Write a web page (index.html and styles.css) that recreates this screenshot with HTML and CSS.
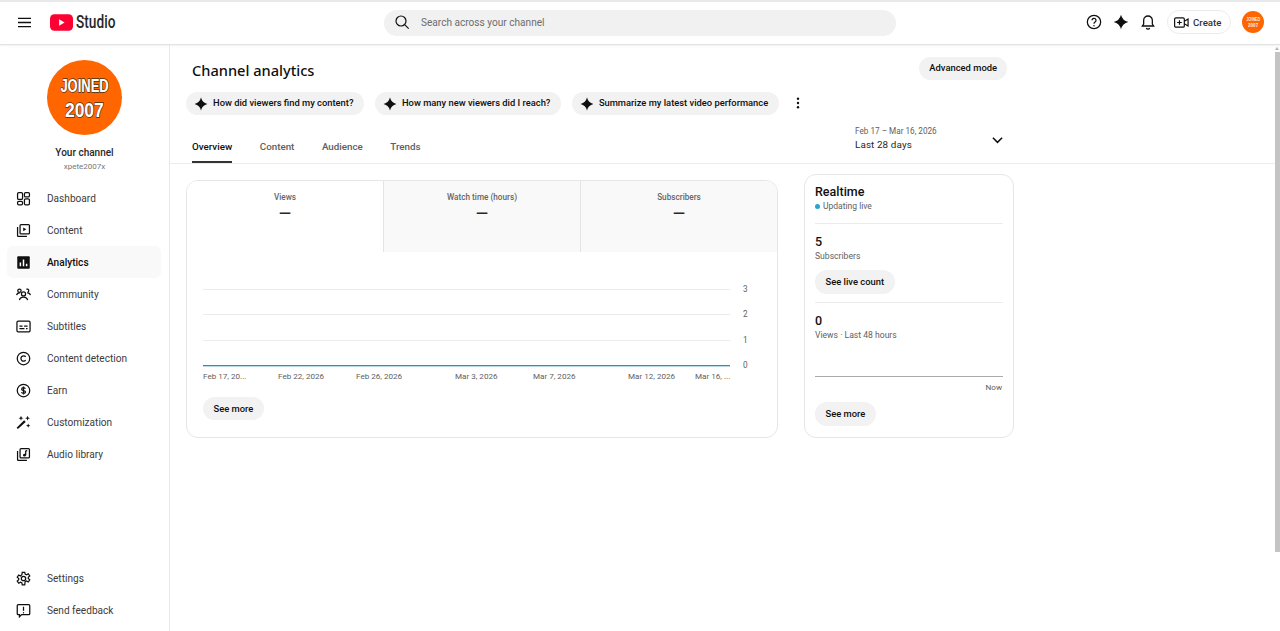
FILE: index.html
```html
<!DOCTYPE html>
<html lang="en">

<head>
    <meta charset="UTF-8">
    <meta name="viewport" content="width=device-width, initial-scale=1.0">
    <title>Channel analytics - YouTube Studio</title>
    <link rel="stylesheet" href="styles.css">
</head>

<body>
    <svg class="defs" width="0" height="0">
        <symbol id="spark" viewBox="0 0 24 24">
            <path d="M12 1Q14.2 9.800 23 12 14.2 14.2 12 23 9.800 14.2 1 12 9.800 9.800 12 1Z" />
        </symbol>
    </svg>

    <!-- top bar -->
    <header class="topbar">
        <div class="topbar-left">
            <svg class="menu-icon" viewBox="0 0 14 11"><path d="M0 1h14M0 5.500h14M0 10h14" /></svg>
            <div class="logo">
                <svg class="logo-mark" viewBox="0 0 24 17">
                    <rect width="24" height="17" rx="4.500" fill="#ff0033" />
                    <path d="M9.500 5.200v6.600l5.700-3.300z" fill="#fff" />
                </svg>
                <span class="logo-text">Studio</span>
            </div>
        </div>
        <div class="search">
            <svg class="search-icon" viewBox="0 0 24 24"><circle cx="10.500" cy="10.500" r="7.500" /><path d="M16 16l6 6" /></svg>
            <span>Search across your channel</span>
        </div>
        <div class="topbar-right">
            <svg class="top-icon line" viewBox="0 0 24 24">
                <circle cx="12" cy="12" r="10" />
                <path d="M9 9.500a3 3 0 1 1 4.600 2.500c-1 .7-1.600 1.300-1.600 2.500" />
                <circle class="dot" cx="12" cy="17.500" r="1.100" />
            </svg>
            <svg class="top-icon spark-icon" viewBox="0 0 24 24"><use href="#spark" /></svg>
            <svg class="top-icon line" viewBox="0 0 24 24">
                <path d="M12 3a6.500 6.500 0 0 0-6.500 6.500V15L3.500 18h17l-2-3V9.500A6.500 6.500 0 0 0 12 3Z" />
                <path d="M9.500 21a2.700 2.700 0 0 0 5 0" />
            </svg>
            <div class="create-btn">
                <svg class="create-icon" viewBox="0 0 24 20">
                    <rect x="1" y="2.500" width="15.500" height="15" rx="2" />
                    <path d="M5 10h7.500M8.750 6.300v7.400M16.500 8l6-3.500v11l-6-3.500" />
                </svg>
                <span>Create</span>
            </div>
            <div class="avatar avatar-small"><span class="avatar-top">JOINED</span><span class="avatar-bottom">2007</span></div>
        </div>
    </header>

    <div class="layout">
        <!-- left menu -->
        <nav class="sidebar">
            <div class="channel">
                <div class="avatar avatar-big"><span class="avatar-top">JOINED</span><span class="avatar-bottom">2007</span></div>
                <div class="channel-name">Your channel</div>
                <div class="channel-handle">xpete2007x</div>
            </div>
            <ul class="menu">
                <li class="menu-item">
                    <svg class="menu-svg" viewBox="0 0 24 24"><rect x="2.500" y="2.500" width="8" height="11" rx="2" /><rect x="13.500" y="2.500" width="8" height="7" rx="2" /><rect x="2.500" y="16.500" width="8" height="5.500" rx="2" /><rect x="13.500" y="12.500" width="8" height="9.500" rx="2" /></svg>
                    Dashboard
                </li>
                <li class="menu-item">
                    <svg class="menu-svg" viewBox="0 0 24 24"><rect x="6.500" y="2.500" width="15" height="15" rx="1.500" /><path d="M2.500 6.500v14a1 1 0 0 0 1 1h14" /><path class="fill" d="M11.500 7v6l5-3z" /></svg>
                    Content
                </li>
                <li class="menu-item active">
                    <svg class="menu-svg" viewBox="0 0 24 24"><rect class="fill" x="2" y="2" width="20" height="20" rx="1.500" /><path class="white" d="M7 12v6M12 7v11M17 14v4" /></svg>
                    Analytics
                </li>
                <li class="menu-item">
                    <svg class="menu-svg" viewBox="0 0 24 24"><circle cx="12" cy="11" r="3.300" /><path d="M5.500 21c.5-3.500 3-5 6.500-5s6 1.500 6.500 5" /><circle cx="5.500" cy="6" r="2.700" /><path d="M1 13c.3-2.500 2-3.800 5-3.800" /><path d="M16.500 3.500a2.700 2.700 0 1 1 2 5" /><path d="M23 13c-.3-2.500-2-3.800-5-3.800" /></svg>
                    Community
                </li>
                <li class="menu-item">
                    <svg class="menu-svg" viewBox="0 0 24 24"><rect x="1.500" y="3.500" width="21" height="17" rx="2" /><path d="M5.500 11.500h5M13 11.500h5.500M5.500 15.500h8M16 15.500h2.500" /></svg>
                    Subtitles
                </li>
                <li class="menu-item">
                    <svg class="menu-svg" viewBox="0 0 24 24"><circle cx="12" cy="12" r="10" /><path d="M15.500 9.200a4.300 4.300 0 1 0 0 5.600" /></svg>
                    Content detection
                </li>
                <li class="menu-item">
                    <svg class="menu-svg" viewBox="0 0 24 24"><circle cx="12" cy="12" r="10" /><path d="M15 9.300c-.5-1.200-1.600-1.800-3-1.800-1.700 0-3 .9-3 2.300 0 3.200 6.200 1.400 6.200 4.500 0 1.400-1.400 2.300-3.200 2.300-1.500 0-2.700-.7-3.200-2M12 5.500v13" /></svg>
                    Earn
                </li>
                <li class="menu-item">
                    <svg class="menu-svg" viewBox="0 0 24 24"><path d="M3 22.500l-2-2L13 8.500l2.500 2.500Z" class="wand" /><path class="fill" d="M8 1l1.100 2.900L12 5l-2.900 1.100L8 9 6.900 6.100 4 5l2.900-1.100zM18.500 1l1.100 2.900L22.500 5l-2.900 1.100L18.500 9l-1.100-2.900L14.500 5l2.900-1.100zM19.500 13.500l1 2.500 2.500 1-2.500 1-1 2.500-1-2.500-2.500-1 2.500-1z" /></svg>
                    Customization
                </li>
                <li class="menu-item">
                    <svg class="menu-svg" viewBox="0 0 24 24"><rect x="6.500" y="2.500" width="15" height="15" rx="1.500" /><path d="M2.500 6.500v14a1 1 0 0 0 1 1h14" /><path d="M15.500 6v7" /><circle class="fill" cx="13.500" cy="13" r="2.200" /><path d="M15.500 6h2.500" /></svg>
                    Audio library
                </li>
            </ul>
            <ul class="menu menu-bottom">
                <li class="menu-item">
                    <svg class="menu-svg" viewBox="0 0 24 24"><path d="M10 2h4l.6 3 2.300 1 2.700-1.600 2.400 3.600-2.300 2v2l2.300 2-2.400 3.600-2.700-1.600-2.300 1L14 22h-4l-.6-3-2.300-1-2.700 1.600L2 16l2.300-2v-2L2 10l2.400-3.600L7.100 8l2.300-2Z" /><circle cx="12" cy="12" r="3.500" /></svg>
                    Settings
                </li>
                <li class="menu-item">
                    <svg class="menu-svg" viewBox="0 0 24 24"><path d="M3.500 2.500h17a1.500 1.500 0 0 1 1.500 1.500v13a1.500 1.500 0 0 1-1.500 1.500H9L5.500 22v-3.500h-2A1.500 1.500 0 0 1 2 17V4a1.500 1.500 0 0 1 1.500-1.500Z" /><path d="M12 6v6.500" /><circle class="dot" cx="12" cy="15.500" r="1.100" /></svg>
                    Send feedback
                </li>
            </ul>
        </nav>

        <main class="main">
            <div class="title-row">
                <h1 class="page-title">Channel analytics</h1>
                <div class="pill">Advanced mode</div>
            </div>
            <div class="chips">
                <div class="pill chip"><svg class="chip-icon" viewBox="0 0 24 24"><use href="#spark" /></svg>How did viewers find my content?</div>
                <div class="pill chip"><svg class="chip-icon" viewBox="0 0 24 24"><use href="#spark" /></svg>How many new viewers did I reach?</div>
                <div class="pill chip"><svg class="chip-icon" viewBox="0 0 24 24"><use href="#spark" /></svg>Summarize my latest video performance</div>
                <svg class="more-icon" viewBox="0 0 4 14"><circle cx="2" cy="2" r="1.400" /><circle cx="2" cy="7" r="1.400" /><circle cx="2" cy="12" r="1.400" /></svg>
            </div>
            <div class="tabs-row">
                <div class="tabs">
                    <div class="tab tab-active">Overview</div>
                    <div class="tab">Content</div>
                    <div class="tab">Audience</div>
                    <div class="tab">Trends</div>
                </div>
                <div class="date-picker">
                    <div>
                        <div class="date-range">Feb 17 – Mar 16, 2026</div>
                        <div class="date-label">Last 28 days</div>
                    </div>
                    <svg class="chevron" viewBox="0 0 12 8"><path d="M1 1.500l5 5 5-5" /></svg>
                </div>
            </div>

            <div class="cards">
                <section class="card overview-card">
                    <div class="metrics">
                        <div class="metric metric-active"><div class="metric-name">Views</div><div class="metric-value">—</div></div>
                        <div class="metric"><div class="metric-name">Watch time (hours)</div><div class="metric-value">—</div></div>
                        <div class="metric"><div class="metric-name">Subscribers</div><div class="metric-value">—</div></div>
                    </div>
                    <div class="chart">
                        <div class="chart-row"><div class="grid-line"></div><span>3</span></div>
                        <div class="chart-row"><div class="grid-line"></div><span>2</span></div>
                        <div class="chart-row"><div class="grid-line"></div><span>1</span></div>
                        <div class="chart-row chart-row-base"><div class="grid-line base-line"></div><span>0</span></div>
                        <div class="chart-dates">
                            <span>Feb 17, 20...</span>
                            <span>Feb 22, 2026</span>
                            <span>Feb 26, 2026</span>
                            <span>Mar 3, 2026</span>
                            <span>Mar 7, 2026</span>
                            <span>Mar 12, 2026</span>
                            <span>Mar 16, ...</span>
                        </div>
                    </div>
                    <div class="pill card-btn">See more</div>
                </section>

                <section class="card realtime-card">
                    <h2 class="realtime-title">Realtime</h2>
                    <div class="live"><i class="live-dot"></i>Updating live</div>
                    <div class="divider"></div>
                    <div class="stat">5</div>
                    <div class="stat-label">Subscribers</div>
                    <div class="pill card-btn live-btn">See live count</div>
                    <div class="divider"></div>
                    <div class="stat">0</div>
                    <div class="stat-label">Views · Last 48 hours</div>
                    <div class="mini-chart"></div>
                    <div class="now">Now</div>
                    <div class="pill card-btn">See more</div>
                </section>
            </div>
        </main>

        <div class="scrollbar"><div class="scroll-arrow"></div><div class="scroll-thumb"></div></div>
    </div>
</body>

</html>
```

FILE: styles.css
```css
* {
    margin: 0;
    padding: 0;
    box-sizing: border-box;
}

html,
body {
    height: 100%;
    overflow: hidden;
}

body {
    background-color: #fff;
    color: #0f0f0f;
    font-family: Roboto, "Liberation Sans", sans-serif;
    font-size: 10px;
}

ul {
    list-style: none;
}

.defs {
    display: block;
    height: 0;
}

/* top bar */
.topbar {
    height: 45px;
    display: flex;
    align-items: center;
    border-top: 2px solid #e9e9e9;
    border-bottom: 1px solid #e2e2e2;
    box-shadow: 0 1px 2px rgba(0, 0, 0, .06);
    padding: 0 16px 2px 0;
}

.topbar-left {
    width: 384px;
    display: flex;
    align-items: center;
    padding-left: 18px;
}

.menu-icon {
    width: 13px;
    height: 11px;
    fill: none;
    stroke: #0f0f0f;
    stroke-width: 1.4;
}

.logo {
    display: flex;
    align-items: center;
    margin-left: 19px;
}

.logo-mark {
    width: 23px;
    height: 17px;
}

.logo-text {
    font-size: 18px;
    font-weight: 500;
    color: #282828;
    transform: scaleX(.76);
    transform-origin: left center;
    margin: -1px 0 0 3px;
}

.search {
    width: 512px;
    height: 26px;
    margin-top: 2px;
    background-color: #f1f1f1;
    border-radius: 13px;
    display: flex;
    align-items: center;
    padding: 0 0 2px 10px;
    color: #6d6d6d;
    font-size: 10.1px;
}

.search-icon {
    width: 16px;
    height: 16px;
    fill: none;
    stroke: #0f0f0f;
    stroke-width: 1.8;
    margin-right: 11px;
}

.topbar-right {
    flex: 1;
    display: flex;
    align-items: center;
    justify-content: flex-end;
}

.top-icon {
    width: 16px;
    height: 16px;
    margin-right: 11px;
}

.top-icon.line {
    fill: none;
    stroke: #0f0f0f;
    stroke-width: 1.9;
}

.top-icon .dot {
    fill: #0f0f0f;
    stroke: none;
}

.spark-icon {
    fill: #0f0f0f;
}

.create-btn {
    width: 64px;
    height: 24px;
    border: 1px solid #ececec;
    border-radius: 12px;
    display: flex;
    align-items: center;
    padding-left: 6px;
    font-size: 9.7px;
    font-weight: 500;
    color: #333;
}

.create-icon {
    width: 15px;
    height: 13px;
    fill: none;
    stroke: #0f0f0f;
    stroke-width: 1.9;
    margin-right: 4px;
}

/* channel picture */
.avatar {
    border-radius: 50%;
    background-color: #ff6600;
    color: #fff;
    display: flex;
    flex-direction: column;
    align-items: center;
    justify-content: center;
    font-family: "Liberation Sans", sans-serif;
    font-weight: 700;
    flex-shrink: 0;
}

.avatar span {
    display: block;
}

.avatar-top {
    transform: scaleX(.72);
}

.avatar-bottom {
    transform: scaleX(.83);
}

.avatar-small {
    width: 22px;
    height: 22px;
    margin-left: 11px;
    color: #f3f0ee;
}

.avatar-small .avatar-top {
    font-size: 5px;
    line-height: 6px;
}

.avatar-small .avatar-bottom {
    font-size: 5.5px;
    line-height: 7px;
}

.avatar-big {
    width: 75px;
    height: 75px;
    padding-top: 2px;
    -webkit-text-stroke: 1.4px #4a3020;
    paint-order: stroke fill;
}

.avatar-big .avatar-top {
    font-size: 18px;
    line-height: 21px;
}

.avatar-big .avatar-bottom {
    font-size: 21px;
    line-height: 25px;
}

/* left menu */
.layout {
    display: flex;
    height: 586px;
}

.sidebar {
    width: 170px;
    flex-shrink: 0;
    border-right: 1px solid #e8e8e8;
    display: flex;
    flex-direction: column;
    padding-bottom: 5px;
}

.channel {
    display: flex;
    flex-direction: column;
    align-items: center;
    padding-top: 15px;
}

.channel-name {
    margin-top: 11px;
    font-size: 10px;
    font-weight: 500;
    line-height: 14px;
    color: #282828;
}

.channel-handle {
    font-size: 8px;
    line-height: 13px;
    color: #777;
}

.menu {
    margin-top: 9px;
}

.menu-bottom {
    margin-top: auto;
}

.menu-item {
    height: 32px;
    margin: 0 8px 0 7px;
    padding-left: 9px;
    border-radius: 6px;
    display: flex;
    align-items: center;
    font-size: 10.1px;
    color: #3c3c3c;
}

.menu-item.active {
    background-color: #f9f9f9;
    font-weight: 500;
    color: #0f0f0f;
}

.menu-svg {
    width: 15px;
    height: 15px;
    margin-right: 16px;
    fill: none;
    stroke: #0f0f0f;
    stroke-width: 2;
    flex-shrink: 0;
}

.menu-svg .fill,
.menu-svg .dot {
    fill: #0f0f0f;
    stroke: none;
}

.menu-svg .white {
    stroke: #fff;
    stroke-width: 2.4;
}

.menu-svg .wand {
    fill: #0f0f0f;
    stroke: none;
}

/* main column */
.main {
    flex: 1;
    min-width: 0;
}

.title-row {
    width: 837px;
    display: flex;
    justify-content: space-between;
    align-items: flex-end;
    padding: 12px 0 0 22px;
}

.page-title {
    font-family: "Noto Sans", sans-serif;
    font-size: 14.6px;
    font-weight: 500;
    line-height: 20px;
    color: #0f0f0f;
}

.pill {
    height: 23px;
    padding: 0 10px 2px;
    border-radius: 12px;
    background-color: #f2f2f2;
    display: flex;
    align-items: center;
    font-size: 9.4px;
    font-weight: 500;
    color: #0f0f0f;
    white-space: nowrap;
}

.chips {
    display: flex;
    align-items: center;
    gap: 11px;
    margin: 12px 0 0 16px;
}

.chip {
    padding: 0 10.5px 2px 8px;
    font-size: 9.35px;
}

.chip-icon {
    width: 14px;
    height: 14px;
    margin: 2px 5px 0 0;
    fill: #0f0f0f;
}

.more-icon {
    width: 4px;
    height: 12px;
    margin: -2px 0 0 6px;
    fill: #0f0f0f;
}

.tabs-row {
    height: 49px;
    padding: 0 268px 0 22px;
    border-bottom: 1px solid #ececec;
    display: flex;
    justify-content: space-between;
    align-items: flex-end;
}

.tabs {
    display: flex;
    gap: 27.5px;
}

.tab {
    height: 24px;
    padding-top: 1px;
    line-height: 14px;
    color: #606060;
    font-size: 9.8px;
    font-weight: 500;
    border-bottom: 2px solid transparent;
}

.tab-active {
    color: #0f0f0f;
    border-bottom-color: #333;
}

.date-picker {
    width: 152px;
    margin-bottom: 11px;
    display: flex;
    justify-content: space-between;
    align-items: center;
}

.date-range {
    margin-bottom: 1px;
    font-size: 8.2px;
    line-height: 12px;
    color: #606060;
}

.date-label {
    font-size: 9.9px;
    line-height: 14px;
    letter-spacing: .1px;
    color: #282828;
}

.chevron {
    width: 11px;
    height: 8px;
    margin: 3px 4px 0 0;
    fill: none;
    stroke: #0f0f0f;
    stroke-width: 1.7;
}

/* cards */
.cards {
    display: flex;
    align-items: flex-end;
    gap: 26px;
    margin: 10px 0 0 16px;
}

.card {
    border: 1px solid #e6e6e6;
    border-radius: 12px;
    background-color: #fff;
}

.overview-card {
    width: 592px;
    height: 258px;
    overflow: hidden;
}

.metrics {
    display: flex;
    height: 71px;
}

.metric {
    flex: 1;
    background-color: #f9f9f9;
    border-left: 1px solid #e4e4e4;
    text-align: center;
    padding-top: 10px;
}

.metric-active {
    background-color: #fff;
    border-left: none;
}

.metric-name {
    font-size: 8.2px;
    font-weight: 500;
    line-height: 12px;
    color: #666;
}

.metric-value {
    margin-top: 1px;
    font-size: 16px;
    font-weight: 500;
    line-height: 20px;
    color: #282828;
}

.chart {
    padding: 37px 0 0 16px;
}

.chart-row {
    height: 25.4px;
    display: flex;
    align-items: flex-start;
    color: #606060;
    font-size: 8.2px;
    line-height: 10px;
}

.chart-row-base {
    height: 6px;
}

.chart-row span {
    margin: -5px 0 0 13px;
}

.grid-line {
    width: 527px;
    height: 1px;
    background-color: #ececec;
}

.base-line {
    background-color: #2a93b5;
    box-shadow: 0 1px 0 #b9dbe6;
}

.chart-dates {
    width: 527px;
    display: grid;
    grid-template-columns: 75px 78px 99px 78px 95px 67px 35px;
    font-size: 8.1px;
    line-height: 10px;
    color: #606060;
    white-space: nowrap;
}

.card-btn {
    display: inline-flex;
    padding: 0 10.5px 2px;
}

.overview-card .card-btn {
    margin: 16px 0 0 16px;
    padding-bottom: 0;
}

.realtime-card {
    width: 210px;
    height: 264px;
    padding: 10px 10px 0 10px;
}

.realtime-title {
    font-size: 12.5px;
    font-weight: 500;
    line-height: 14px;
}

.live {
    display: flex;
    align-items: center;
    margin-top: 2px;
    font-size: 8.5px;
    line-height: 11px;
    color: #606060;
}

.live-dot {
    width: 5px;
    height: 5px;
    margin-right: 3px;
    border-radius: 50%;
    background-color: #2aa3cf;
}

.divider {
    height: 1px;
    margin-top: 11px;
    background-color: #ececec;
}

.stat {
    margin-top: 10px;
    font-size: 12.5px;
    font-weight: 500;
    line-height: 16px;
}

.stat-label {
    font-size: 8.6px;
    line-height: 12px;
    color: #606060;
}

.realtime-card .card-btn {
    height: 24px;
    margin-top: 10px;
}

.realtime-card .live-btn {
    display: flex;
    width: 80px;
    margin-top: 8px;
}

.realtime-card .live-btn + .divider {
    margin-top: 8px;
}

.mini-chart {
    height: 36px;
    border-bottom: 1px solid #aaa;
}

.now {
    margin-top: 5px;
    padding-right: 1px;
    text-align: right;
    font-size: 8.1px;
    line-height: 10px;
    color: #606060;
}

/* page scrollbar */
.scrollbar {
    width: 5px;
    flex-shrink: 0;
    padding-top: 2px;
}

.scroll-arrow {
    width: 0;
    height: 3px;
    margin-bottom: 2px;
    border-left: 2.5px solid transparent;
    border-right: 2.5px solid transparent;
    border-bottom: 3px solid #b5b5b5;
}

.scroll-thumb {
    height: 500px;
    background-color: #c4c4c4;
}
```
